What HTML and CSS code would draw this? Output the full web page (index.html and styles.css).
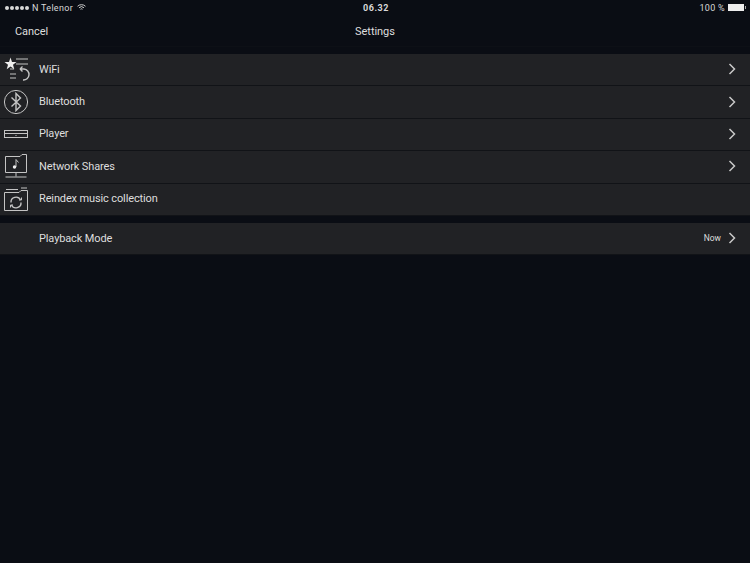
FILE: index.html
```html
<html>

<head>
    <meta charset="utf-8">
    <title>Settings</title>
    <link rel="stylesheet" href="styles.css">
</head>

<body>
    <!-- status bar -->
    <div class="statusbar">
        <div class="status-left">
            <span class="dots"><i></i><i></i><i></i><i></i><i></i></span>
            <span>N Telenor</span>
            <svg class="wifi" width="9" height="7" viewBox="0 0 10 8">
                <path d="M0.5 2.6 A6.5 6.5 0 0 1 9.5 2.6" />
                <path d="M2.2 4.3 A4 4 0 0 1 7.8 4.3" />
                <path d="M3.9 6 A1.6 1.6 0 0 1 6.1 6" />
            </svg>
        </div>
        <div class="status-time">06.32</div>
        <div class="status-right">
            <span>100 %</span>
            <span class="battery"></span>
        </div>
    </div>

    <!-- nav bar -->
    <div class="navbar">
        <div class="nav-cancel">Cancel</div>
        <div class="nav-title">Settings</div>
        <div class="nav-spacer"></div>
    </div>

    <!-- first group -->
    <ul class="group">
        <li class="row">
            <svg class="row-icon" width="30" height="30" viewBox="0 0 30 30">
                <path d="M15 5H27M15 10H27M9 15H13M9 20H15M9 24H15" />
                <path class="thick" d="M19 15H23A5.5 5.5 0 0 1 22 26M19 15L21.5 12.5M19 15L21.5 17.5" />
                <path class="fill" d="M9.5 3.5L11 8H15.5L12 10.8L13.3 15.3L9.5 12.6L5.7 15.3L7 10.8L3.5 8H8Z" />
            </svg>
            <span class="row-label">WiFi</span>
            <svg class="chevron" width="8" height="12" viewBox="0 0 8 12"><path d="M1.5 1L6.5 6L1.5 11" /></svg>
        </li>
        <li class="row">
            <svg class="row-icon" width="30" height="30" viewBox="0 0 30 30">
                <circle cx="15" cy="15" r="11.6" />
                <path class="thick" d="M10.5 10.5L19.5 19L15 23.5V6.5L19.5 11L10.5 19.5" />
            </svg>
            <span class="row-label">Bluetooth</span>
            <svg class="chevron" width="8" height="12" viewBox="0 0 8 12"><path d="M1.5 1L6.5 6L1.5 11" /></svg>
        </li>
        <li class="row">
            <svg class="row-icon" width="30" height="30" viewBox="0 0 30 30">
                <rect x="3.5" y="11.5" width="23" height="7" />
                <path d="M3.5 14.5H26.5M15 16V17" />
            </svg>
            <span class="row-label">Player</span>
            <svg class="chevron" width="8" height="12" viewBox="0 0 8 12"><path d="M1.5 1L6.5 6L1.5 11" /></svg>
        </li>
        <li class="row">
            <svg class="row-icon" width="30" height="30" viewBox="0 0 30 30">
                <path d="M4.5 5.5H19L21 3.5H25.5V21.5H4.5Z" />
                <path d="M15 21.5V25.5M4.5 26H25.5" />
                <path d="M15 16V8.5L17.5 11.5" />
                <circle class="fill" cx="13.5" cy="16" r="1.7" />
            </svg>
            <span class="row-label">Network Shares</span>
            <svg class="chevron" width="8" height="12" viewBox="0 0 8 12"><path d="M1.5 1L6.5 6L1.5 11" /></svg>
        </li>
        <li class="row">
            <svg class="row-icon" width="30" height="30" viewBox="0 0 30 30">
                <path d="M3.5 8.5H18L20 6.5H26.5V26.5H3.5Z" />
                <path d="M5 5.5H17M20 4H26" />
                <path class="thick" d="M10 18.5A5 5 0 0 1 19.5 16M20 18.5A5 5 0 0 1 10.5 21" />
                <path d="M18 16H20.5V13.5M12 21H9.5V23.5" />
            </svg>
            <span class="row-label">Reindex music collection</span>
        </li>
    </ul>

    <!-- second group -->
    <ul class="group group-second">
        <li class="row">
            <span class="row-icon-empty"></span>
            <span class="row-label">Playback Mode</span>
            <span class="row-value">Now</span>
            <svg class="chevron" width="8" height="12" viewBox="0 0 8 12"><path d="M1.5 1L6.5 6L1.5 11" /></svg>
        </li>
    </ul>
</body>

</html>
```

FILE: styles.css
```css
* {
    margin: 0;
    padding: 0;
    box-sizing: border-box;
}

html {
    height: 100%;
    background: #0a0d14;
}

body {
    width: 750px;
    height: 563px;
    overflow: hidden;
    font-family: "Roboto", "Liberation Sans", sans-serif;
    color: #dedede;
}

/*status bar*/

.statusbar {
    height: 15px;
    padding: 0 5px;
    display: flex;
    align-items: center;
    justify-content: space-between;
    font-size: 9px;
    color: #d8d8d8;
    letter-spacing: 0.3px;
}

.status-left,
.status-right {
    width: 200px;
    display: flex;
    align-items: center;
    gap: 3px;
}

.status-right {
    justify-content: flex-end;
}

.status-time {
    font-weight: bold;
    letter-spacing: 0.5px;
    margin-left: 2px;
}

.dots {
    display: flex;
    gap: 1px;
}

.dots i {
    width: 4px;
    height: 4px;
    border-radius: 50%;
    background: #d8d8d8;
}

.wifi {
    margin-left: 1px;
    fill: none;
    stroke: #d8d8d8;
    stroke-width: 1.1;
}

.battery {
    position: relative;
    width: 16px;
    height: 7px;
    margin-right: 1px;
    background: #eee;
}

.battery:after {
    content: '';
    position: absolute;
    right: -2px;
    top: 2px;
    width: 1px;
    height: 3px;
    background: #aaa;
}

/*nav bar*/

.navbar {
    height: 32px;
    padding: 1px 15px 0;
    display: flex;
    align-items: center;
    justify-content: space-between;
    font-size: 11px;
    letter-spacing: -0.05px;
    border-bottom: 1px solid #0d1016;
}

.nav-cancel,
.nav-spacer {
    width: 100px;
}

/*rows*/

.group {
    list-style-type: none;
    margin-top: 7px;
    background: #212225;
}

.group-second {
    margin-top: 7px;
}

.row {
    height: 32.4px;
    display: flex;
    align-items: center;
    padding-right: 14px;
    padding-bottom: 1px;
    border-bottom: 1px solid #111317;
    font-size: 11px;
    letter-spacing: -0.13px;
}

.row-icon {
    flex: none;
    margin: 0 8px 0 1px;
    fill: none;
    stroke: #c4c4c4;
    stroke-width: 1;
}

.row-icon .fill {
    fill: #eee;
    stroke: none;
}

.row-icon .thick {
    stroke-width: 1.4;
}

.row-icon-empty {
    width: 39px;
    flex: none;
}

.row-label {
    flex: 1;
}

.row-value {
    font-size: 8.5px;
    margin-right: 7px;
    letter-spacing: 0;
}

.chevron {
    fill: none;
    stroke: #c8c8c8;
    stroke-width: 1.5;
}
```
